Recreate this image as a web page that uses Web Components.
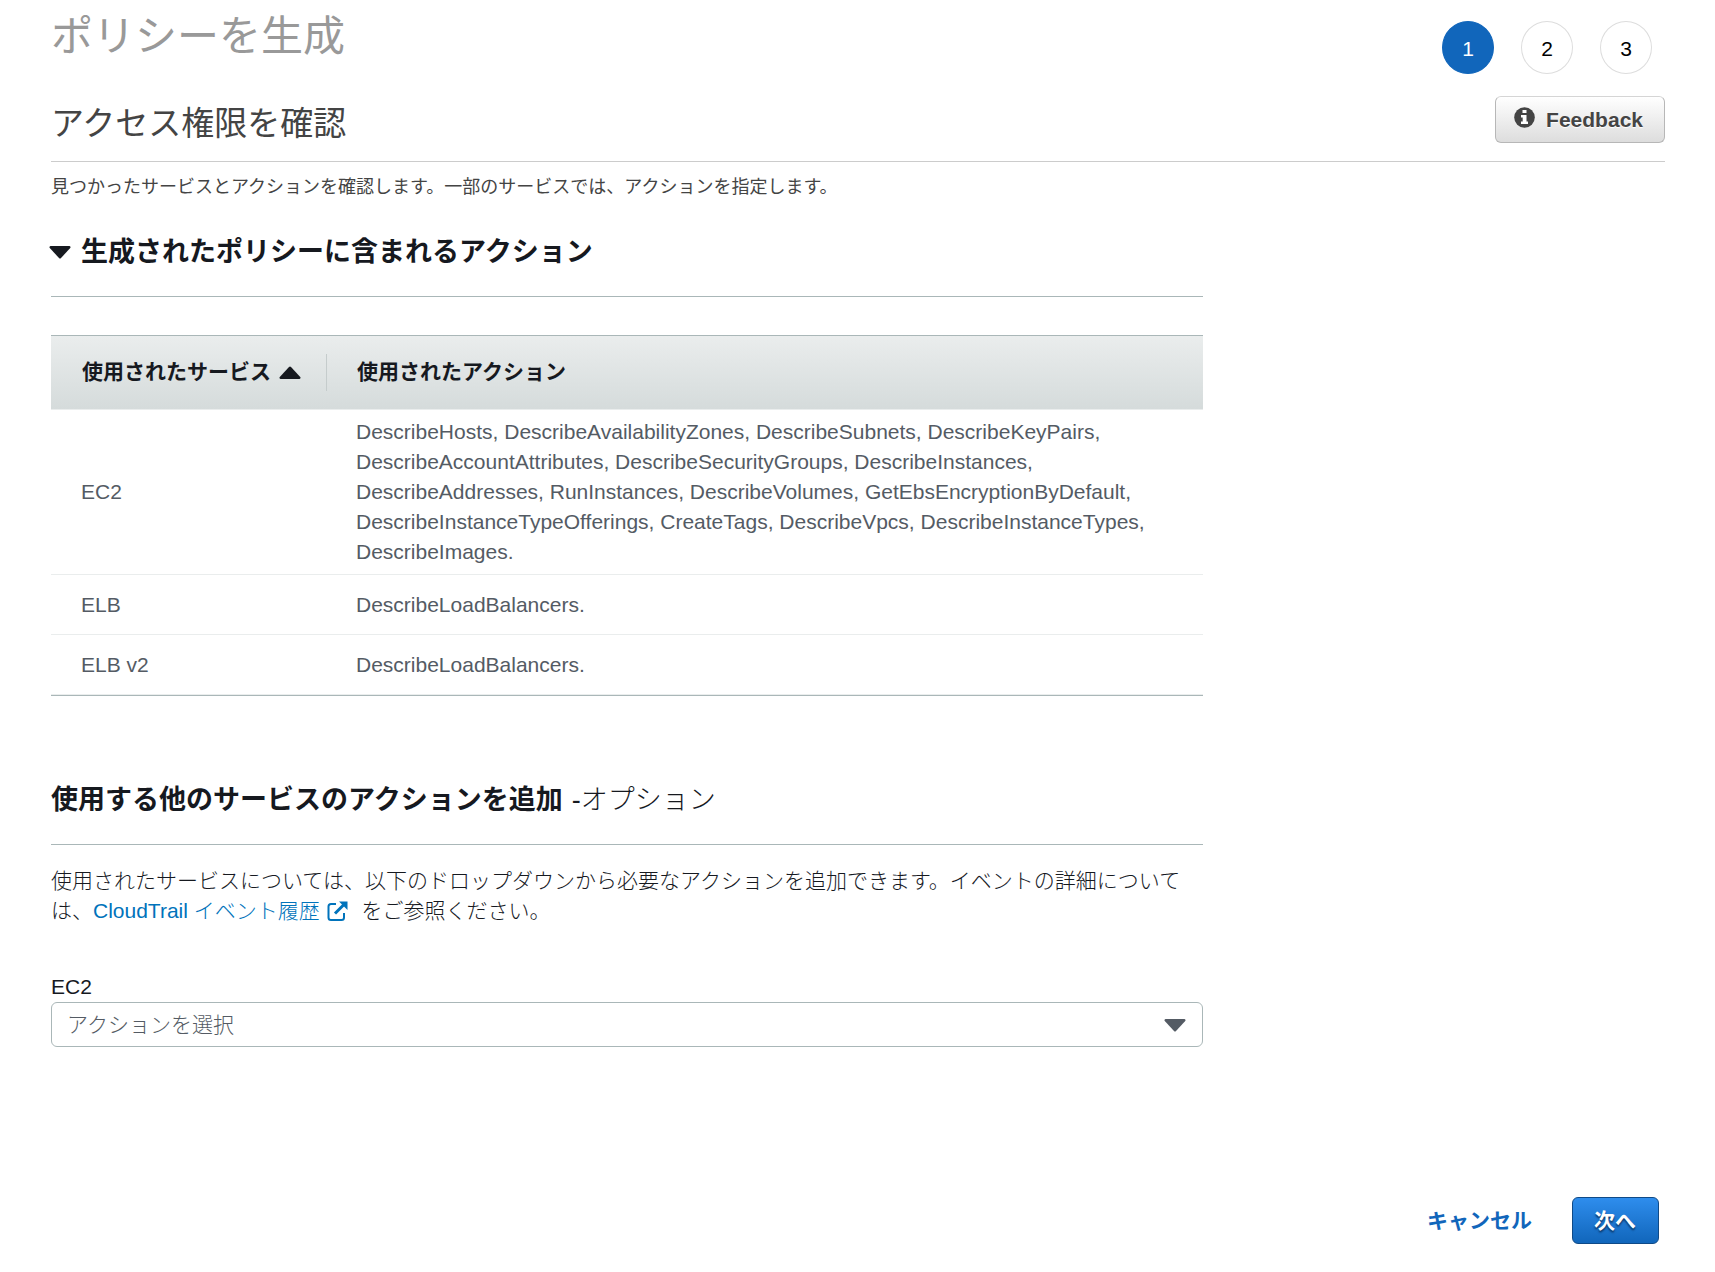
<!DOCTYPE html>
<html lang="ja">
<head>
<meta charset="utf-8">
<title>ポリシーを生成</title>
<style>
  body {
    margin: 0;
    background: #fff;
    color: #16191f;
    font: 21px/30px "Liberation Sans", "Noto Sans CJK JP", sans-serif;
  }
</style>
</head>
<body>
<policy-wizard></policy-wizard>

<template id="wizard-tpl">
  <style>
    :host { display: block; padding: 12px 50px 28px 51px; }
    .top { display: flex; justify-content: space-between; align-items: flex-start; }
    h1 { margin: 0; font-size: 42px; line-height: 50px; font-weight: 400; color: #999; }
    step-list { margin: 9px 13px 0 0; }
    .sub { display: flex; justify-content: space-between; align-items: center; margin-top: 22px; padding-bottom: 18px; border-bottom: 1px solid #ccc; }
    h2 { margin: 9px 0 0; font-size: 33px; line-height: 38px; font-weight: 400; color: #444; }
    .intro { margin: 12px 0 0; font-size: 18px; line-height: 27px; font-weight: 400; color: #444; }
    .cols { display: grid; grid-template-columns: minmax(0, 5fr) minmax(0, 2fr); column-gap: 1px; }
    p.more { margin: 21px 0 0; font-weight: 300; }
    a { color: #0073bb; text-decoration: none; }
    a svg { width: 21px; height: 21px; margin: 0 8px 0 7px; vertical-align: -4px; }
  </style>
  <div class="top">
    <h1>ポリシーを生成</h1>
    <step-list count="3" current="1"></step-list>
  </div>
  <div class="sub">
    <h2>アクセス権限を確認</h2>
    <feedback-button>Feedback</feedback-button>
  </div>
  <p class="intro">見つかったサービスとアクションを確認します。一部のサービスでは、アクションを指定します。</p>
  <div class="cols">
    <main>
      <section-title collapsible>生成されたポリシーに含まれるアクション</section-title>
      <action-table></action-table>
      <section-title class="second">使用する他のサービスのアクションを追加<span slot="note">-オプション</span></section-title>
      <p class="more">使用されたサービスについては、以下のドロップダウンから必要なアクションを追加できます。イベントの詳細については、<a href="#">CloudTrail イベント履歴<svg viewBox="0 0 21 21" fill="none" stroke="#0073bb" stroke-width="2" aria-hidden="true"><path d="M9 3H4Q1.500 3 1.500 5.500V16.500Q1.500 19 4 19H14.500Q17 19 17 16.500V12"/><path d="M8 12.500L17 3.500" stroke-width="3"/><path d="M12 .5H20.500V9Z" fill="#0073bb" stroke="none"/></svg></a> をご参照ください。</p>
      <action-select label="EC2" placeholder="アクションを選択"></action-select>
    </main>
  </div>
  <wizard-footer></wizard-footer>
</template>

<template id="title-tpl">
  <style>
    :host { display: block; padding: 33px 0 26px; border-bottom: 1px solid #aab7b8; }
    :host(.second) { padding-top: 86px; }
    h3 { display: flex; align-items: center; margin: 0; font-size: 27px; line-height: 36px; font-weight: 700; }
    button { display: none; padding: 0; border: 0; background: none; margin: 0 10px 0 -2px; }
    :host([collapsible]) button { display: flex; }
    ::slotted([slot=note]) { font-weight: 300; margin-left: 9px; }
  </style>
  <h3><button type="button" aria-label="折りたたむ"><svg width="22" height="13" viewBox="0 0 22 13" aria-hidden="true"><path d="M1.500 0H20.500Q22.300 .8 21 2.300L12 12Q11 13 10 12L1 2.300Q-.3 .8 1.500 0Z" fill="#16191f"/></svg></button><slot></slot><slot name="note"></slot></h3>
</template>

<template id="table-tpl">
  <style>
    :host { display: block; margin-top: 38px; }
    table { width: 100%; border-collapse: separate; border-spacing: 0; border-top: 1px solid #aab7b8; border-bottom: 1px solid #aab7b8; table-layout: fixed; }
    col.service { width: 276px; }
    thead tr { background: linear-gradient(#eaeded, #d5dbdb); }
    th { padding: 18px 0; text-align: left; font-weight: 700; height: 37px; }
    th span { display: flex; align-items: center; box-sizing: border-box; height: 37px; padding: 0 0 2px 31px; }
    th + th span { padding-left: 30px; }
    th:first-child span { border-right: 1px solid #c5cccc; }
    th svg { margin: 2px 0 0 8px; }
    td { box-sizing: border-box; height: 60px; padding: 7px 30px; color: #545b64; vertical-align: middle; border-top: 1px solid #eaeded; }
    td + td { padding-left: 29px; }
    tr:last-child td { height: 61px; border-bottom: 1px solid #eaeded; }
  </style>
  <table>
    <colgroup><col class="service"><col></colgroup>
    <thead><tr>
      <th scope="col" aria-sort="ascending"><span>使用されたサービス<svg width="22" height="13" viewBox="0 0 22 13" aria-hidden="true"><path d="M1.500 13H20.500Q22.300 12.200 21 10.700L12 1Q11 0 10 1L1 10.700Q-.3 12.200 1.500 13Z" fill="#16191f"/></svg></span></th>
      <th scope="col"><span>使用されたアクション</span></th>
    </tr></thead>
    <tbody></tbody>
  </table>
</template>

<template id="select-tpl">
  <style>
    :host { display: block; margin-top: 45px; }
    label { display: block; line-height: 31px; }
    .box { display: grid; align-items: center; }
    select, svg { grid-area: 1 / 1; }
    select { appearance: none; width: 100%; height: 45px; padding: 0 48px 0 15px; border: 1px solid #aab7b8; border-radius: 6px; background: #fff; color: #545b64; font: inherit; font-weight: 300; }
    svg { justify-self: end; margin: 1px 17px 0 0; pointer-events: none; }
  </style>
  <label for="actions"></label>
  <div class="box">
    <select id="actions"><option></option></select>
    <svg width="22" height="13" viewBox="0 0 22 13" aria-hidden="true"><path d="M1.500 0H20.500Q22.300 .8 21 2.300L12 12Q11 13 10 12L1 2.300Q-.3 .8 1.500 0Z" fill="#545b64"/></svg>
  </div>
</template>

<script>
  class Base extends HTMLElement {
    constructor() { super(); this.attachShadow({ mode: "open" }); }
    stamp(id) { this.shadowRoot.replaceChildren(document.getElementById(id).content.cloneNode(true)); }
  }

  customElements.define("step-list", class extends Base {
    connectedCallback() {
      const current = this.getAttribute("current");
      let items = "";
      for (let i = 1; i <= +this.getAttribute("count"); i++)
        items += `<li${String(i) === current ? ' aria-current="step"' : ""}>${i}</li>`;
      this.shadowRoot.innerHTML = `<style>
        :host { display: block; }
        ol { display: flex; gap: 27px; margin: 0; padding: 0; list-style: none; }
        li { box-sizing: border-box; width: 52px; height: 53px; border: 1px solid #ddd; border-radius: 50%;
             display: flex; align-items: center; justify-content: center; color: #000; padding-top: 2px; }
        li[aria-current] { background: #1166bb; border-color: #1166bb; color: #fff; }
      </style><ol>${items}</ol>`;
    }
  });

  customElements.define("feedback-button", class extends Base {
    connectedCallback() {
      this.shadowRoot.innerHTML = `<style>
        :host { display: block; }
        button { display: flex; align-items: center; gap: 11px; height: 47px; padding: 0 21px 0 18px; border: 1px solid #b7b7b7;
                 border-top-color: #d5d5d5; border-radius: 6px; background: linear-gradient(#fff, #ddd); color: #444;
                 font: inherit; font-weight: 700; text-shadow: 0 1px 1px #fff; }
        svg { margin-bottom: 4px; }
      </style><button type="button"><svg width="21" height="21" viewBox="0 0 21 21" aria-hidden="true"><circle cx="10.500" cy="10.500" r="10.300" fill="#444"/><path d="M8.500 3H12.500V6H8.500ZM7 8H12.500V14.500H14V17H7V14.500H8.700V10.500H7Z" fill="#fff"/></svg><slot></slot></button>`;
    }
  });

  customElements.define("section-title", class extends Base {
    connectedCallback() { this.stamp("title-tpl"); }
  });

  const usedActions = [
    ["EC2", "DescribeHosts, DescribeAvailabilityZones, DescribeSubnets, DescribeKeyPairs, DescribeAccountAttributes, DescribeSecurityGroups, DescribeInstances, DescribeAddresses, RunInstances, DescribeVolumes, GetEbsEncryptionByDefault, DescribeInstanceTypeOfferings, CreateTags, DescribeVpcs, DescribeInstanceTypes, DescribeImages."],
    ["ELB", "DescribeLoadBalancers."],
    ["ELB v2", "DescribeLoadBalancers."]
  ];

  customElements.define("action-table", class extends Base {
    connectedCallback() {
      this.stamp("table-tpl");
      const body = this.shadowRoot.querySelector("tbody");
      for (const cells of usedActions) {
        const row = body.insertRow();
        for (const text of cells) row.insertCell().textContent = text;
      }
    }
  });

  customElements.define("action-select", class extends Base {
    connectedCallback() {
      this.stamp("select-tpl");
      this.shadowRoot.querySelector("label").textContent = this.getAttribute("label");
      this.shadowRoot.querySelector("option").textContent = this.getAttribute("placeholder");
    }
  });

  customElements.define("wizard-footer", class extends Base {
    connectedCallback() {
      this.shadowRoot.innerHTML = `<style>
        :host { display: flex; justify-content: flex-end; align-items: center; gap: 40px; margin-top: 150px; padding-right: 6px; }
        a { color: #1166bb; font-weight: 700; text-decoration: none; }
        button { height: 47px; padding: 0 22px 0 21px; border: 1px solid #0f4a87; border-radius: 6px;
                 background: linear-gradient(#2e8ded, #1166bb); color: #fff; font: inherit; font-weight: 700;
                 text-shadow: 0 2px 2px #0a3566; }
      </style><a href="#">キャンセル</a><button type="button">次へ</button>`;
    }
  });

  customElements.define("policy-wizard", class extends Base {
    connectedCallback() { this.stamp("wizard-tpl"); }
  });
</script>
</body>
</html>
